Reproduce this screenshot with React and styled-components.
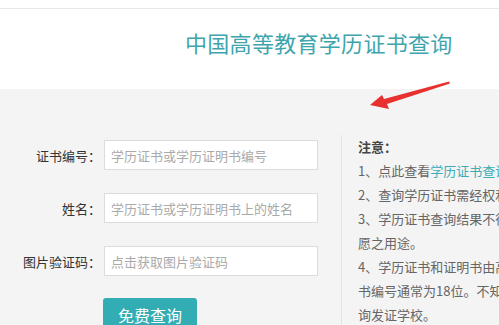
import styled, { createGlobalStyle } from "styled-components";

const GlobalStyle = createGlobalStyle`
  html, body {
    margin: 0;
    padding: 0;
    background: #f4f4f4;
    overflow: hidden;
  }
  body {
    font-family: "Noto Sans CJK SC", "Liberation Sans", sans-serif;
  }
`;

const Page = styled.div`
  position: relative;
  width: 499px;
  height: 325px;
  overflow: hidden;
`;

const TopBar = styled.div`
  height: 8px;
  background: #fff;
  border-bottom: 1px solid #e8e8e8;
  box-shadow: 0 1px 2px rgba(0, 0, 0, 0.04);
`;

const Header = styled.header`
  height: 80px;
  background: #fff;
  padding: 19px 0 0 185px;
  box-sizing: border-box;
`;

const Title = styled.h1`
  margin: 0;
  font-size: 22px;
  line-height: 28px;
  font-weight: 400;
  color: #3fa5ad;
  letter-spacing: 0.3px;
`;

const Arrow = styled.svg`
  position: absolute;
  left: 364px;
  top: 78px;
`;

const Body = styled.main`
  display: flex;
  padding-top: 51px;
`;

const Form = styled.form`
  display: flex;
  flex-direction: column;
  gap: 23px;
  width: 341px;
  flex-shrink: 0;
`;

const Row = styled.div`
  display: flex;
  align-items: center;
  gap: 3px;
`;

const Label = styled.label`
  width: 101px;
  text-align: right;
  font-size: 13px;
  color: #333;
`;

const Input = styled.input`
  width: 214px;
  height: 30px;
  box-sizing: border-box;
  border: 1px solid #dcdcdc;
  background: #fff;
  padding: 0 6px;
  font-family: inherit;
  font-size: 13px;
  color: #333;
  outline: none;
  &::placeholder {
    color: #aaa;
  }
`;

const Submit = styled.button`
  margin: -1px 0 0 103px;
  width: 94px;
  height: 34px;
  border: none;
  border-radius: 3px;
  background: #33adb4;
  color: #fff;
  font-family: inherit;
  font-size: 16px;
  cursor: pointer;
`;

const Notes = styled.aside`
  margin-top: -5px;
  border-left: 1px solid #e3e3e3;
  padding-left: 16px;
  font-size: 13px;
  line-height: 24px;
  color: #666;
  white-space: nowrap;
`;

const NoteTitle = styled.div`
  font-weight: 700;
  color: #444;
`;

const Line = styled.div``;

const Link = styled.a`
  color: #3aaeb7;
  text-decoration: none;
`;

export default function App() {
  return (
    <Page>
      <GlobalStyle />
      <TopBar />
      <Header>
        <Title>中国高等教育学历证书查询</Title>
      </Header>
      <Arrow width="90" height="34" viewBox="0 0 90 34">
        <path
          d="M6 27 L18 17 L20 21 L85 3.5 L86 5.5 L23 26 L25 31 Z"
          fill="#e8312f"
        />
      </Arrow>
      <Body>
        <Form onSubmit={(e) => e.preventDefault()}>
          <Row>
            <Label>证书编号：</Label>
            <Input placeholder="学历证书或学历证明书编号" />
          </Row>
          <Row>
            <Label>姓名：</Label>
            <Input placeholder="学历证书或学历证明书上的姓名" />
          </Row>
          <Row>
            <Label>图片验证码：</Label>
            <Input placeholder="点击获取图片验证码" />
          </Row>
          <Submit type="submit">免费查询</Submit>
        </Form>
        <Notes>
          <NoteTitle>注意：</NoteTitle>
          <Line>
            1、点此查看<Link href="#">学历证书查询范围</Link>。
          </Line>
          <Line>2、查询学历证书需经权利人本人授权。</Line>
          <Line>3、学历证书查询结果不得用于违反权利人意</Line>
          <Line>愿之用途。</Line>
          <Line>4、学历证书和证明书由高校颁发，学历证</Line>
          <Line>书编号通常为18位。不知道证书编号的请咨</Line>
          <Line>询发证学校。</Line>
        </Notes>
      </Body>
    </Page>
  );
}
